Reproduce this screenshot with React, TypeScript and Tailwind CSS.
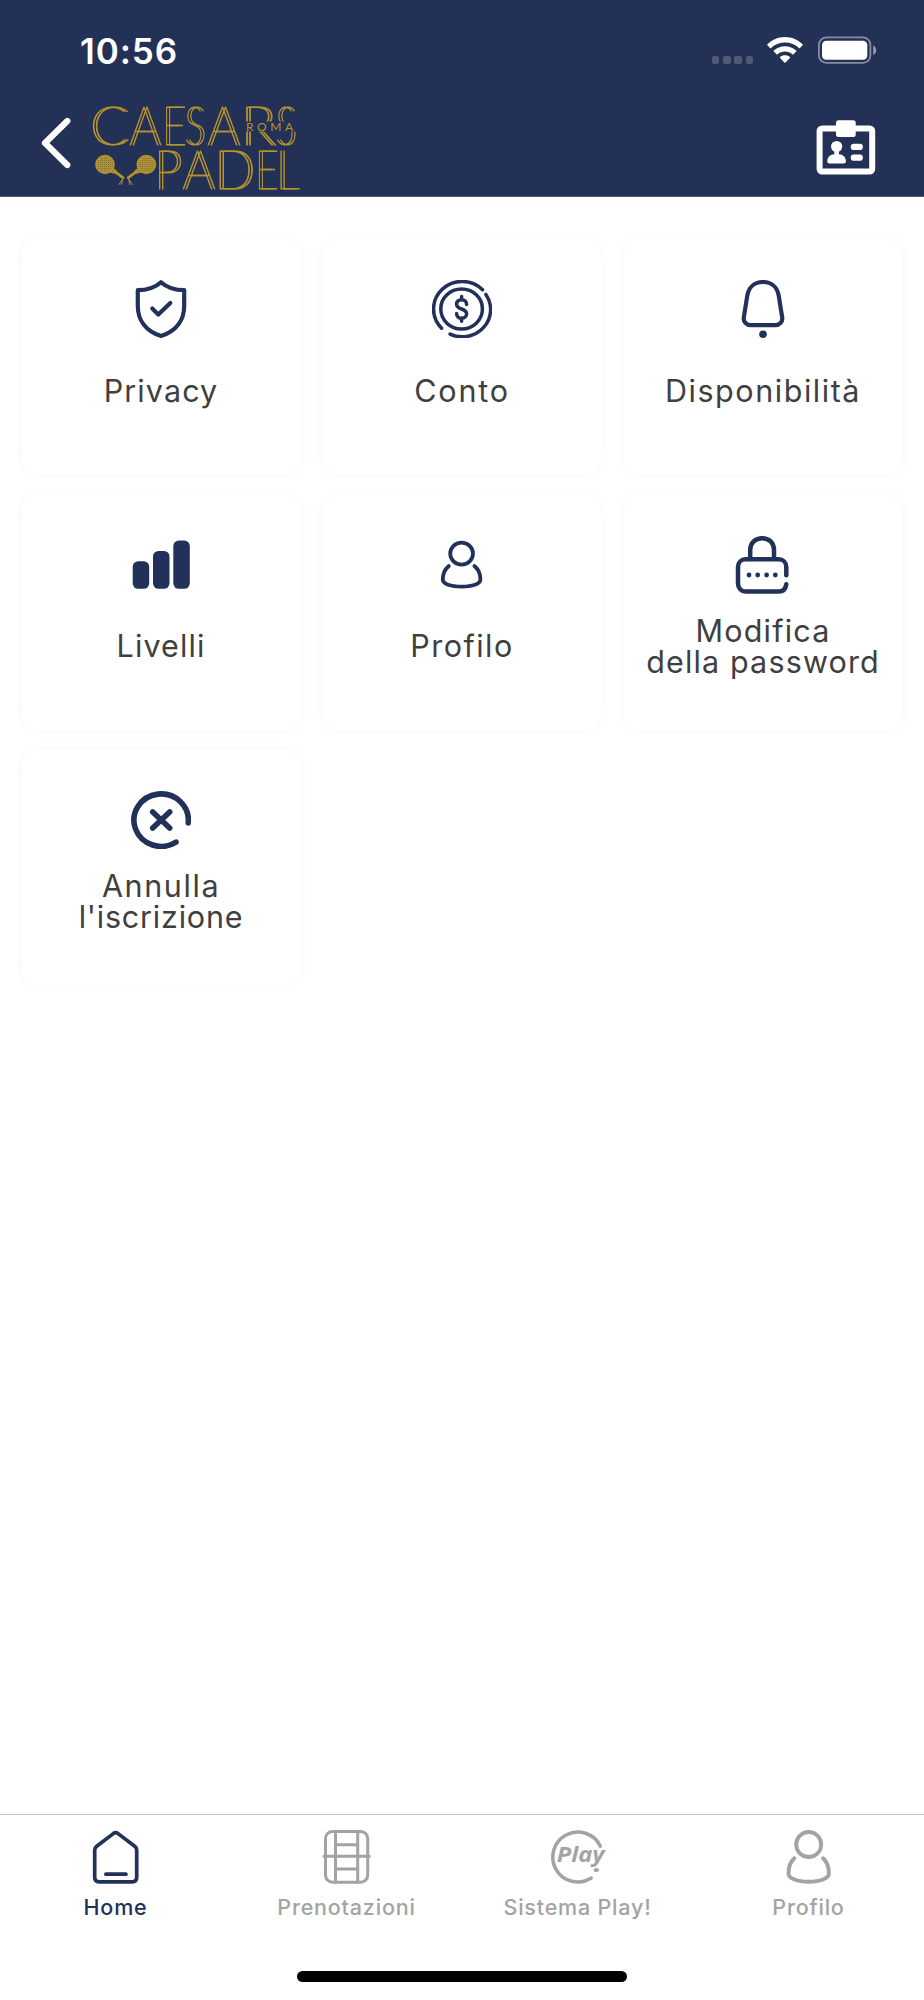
import React from 'react'

type MenuItem = {
  id: string
  lines: { text: string; spacing: string }[]
  icon: React.ReactNode
}

type TabItem = {
  id: string
  label: string
  active?: boolean
  icon: React.ReactNode
}

// glyph, x and width for each letter of the logo
const logoTop: [string, number, number][] = [
  ['C', 89.5, 38],
  ['A', 129, 30],
  ['E', 162, 22],
  ['S', 184.5, 19],
  ['A', 207, 31],
  ['R', 240, 34],
  ['S', 275.5, 19],
]
const logoBottom: [string, number, number][] = [
  ['P', 154, 26],
  ['A', 182, 31],
  ['D', 214, 39],
  ['E', 255, 21],
  ['L', 276, 21],
]

function MenuIcon({ children, width = 4.2 }: { children: React.ReactNode; width?: number }) {
  return (
    <svg
      className="w-[60px] h-[58px] text-[#22315a]"
      viewBox="0 0 60 58"
      fill="none"
      stroke="currentColor"
      strokeWidth={width}
      strokeLinecap="round"
      strokeLinejoin="round"
    >
      {children}
    </svg>
  )
}

function TabIcon({ children, width = 3.5 }: { children: React.ReactNode; width?: number }) {
  return (
    <svg
      className="w-[54px] h-[54px] overflow-visible"
      viewBox="0.3 0 54 54"
      fill="none"
      stroke="currentColor"
      strokeWidth={width}
      strokeLinecap="round"
      strokeLinejoin="round"
    >
      {children}
    </svg>
  )
}

const menuItems: MenuItem[] = [
  {
    id: 'privacy',
    lines: [{ text: 'Privacy', spacing: 'tracking-[1.1px]' }],
    icon: (
      <MenuIcon>
        <path d="M30 2.2C24 7.6 16 10.2 6.8 10.2V26c0 14 8 25 23.2 30 15.2-5 23.2-16 23.2-30V10.2C44 10.2 36 7.6 30 2.2z" />
        <path d="m21.3 28.5 6 6.1 12-11.6" />
      </MenuIcon>
    ),
  },
  {
    id: 'conto',
    lines: [{ text: 'Conto', spacing: 'tracking-[1.8px]' }],
    icon: (
      <MenuIcon width={3.5}>
        <g transform="translate(-0.4 0)">
          <path d="M51 9.8A28.3 27.3 0 1 0 10 48.2" />
          <path d="M54.3 14.4A28.3 27.3 0 0 1 18.5 54.1" />
          <ellipse cx="30" cy="29" rx="20.8" ry="20" />
          <path d="M30 16.5v3.3M30 38v3.3M35 24.6c0-2.9-2-4.9-5-4.9s-5 1.7-5 4.5c0 6 10 3.6 10 9.6 0 2.7-2 4.5-5 4.5s-5-2-5-4.9" />
        </g>
      </MenuIcon>
    ),
  },
  {
    id: 'disponibilita',
    lines: [{ text: 'Disponibilità', spacing: 'tracking-[1.55px]' }],
    icon: (
      <MenuIcon>
        <path d="M30 2C21 2 15.5 8 14.2 16L10.8 37.5c-.8 4.5 3 7.7 7 7.7h24.4c4 0 7.8-3.2 7-7.7L45.8 16C44.5 8 39 2 30 2z" />
        <circle cx="30" cy="54.2" r="3.8" fill="currentColor" stroke="none" />
      </MenuIcon>
    ),
  },
  {
    id: 'livelli',
    lines: [{ text: 'Livelli', spacing: 'tracking-[1.1px]' }],
    icon: (
      <MenuIcon>
        <g fill="currentColor" stroke="none">
          <rect x="1.7" y="25.2" width="16.5" height="27.6" rx="5.5" />
          <rect x="22" y="15" width="16.5" height="37.8" rx="5.5" />
          <rect x="42.3" y="4.6" width="16.5" height="48.2" rx="5.5" />
        </g>
      </MenuIcon>
    ),
  },
  {
    id: 'profilo',
    lines: [{ text: 'Profilo', spacing: 'tracking-[1.5px]' }],
    icon: (
      <MenuIcon width={3.8}>
        <g transform="translate(-0.4 0)">
          <ellipse cx="30" cy="17.6" rx="11.4" ry="11" />
          <path d="M17.2 30C13 33.5 11.2 39 11.2 43.5c0 4.5 8 7.1 18.8 7.1s18.8-2.6 18.8-7.1c0-4.5-1.8-10-6-13.5" />
        </g>
      </MenuIcon>
    ),
  },
  {
    id: 'password',
    lines: [
      { text: 'Modifica', spacing: 'tracking-[1.2px]' },
      { text: 'della password', spacing: 'tracking-[1.15px]' },
    ],
    icon: (
      <MenuIcon width={4.5}>
        <g transform="translate(-1 0)">
          <path d="M54.3 39.2V31c0-4.5-3.3-7.7-7.5-7.7H13.5c-4.2 0-7.5 3.2-7.5 7.7v16.5c0 4.5 3.3 8 7.5 8h33.3c4 0 6.8-2.7 7.5-7.2" />
          <path d="M18.2 23V14c0-7 5.2-11.8 12-11.8S42 7 42 14v9" />
          <g fill="currentColor" stroke="none">
            <circle cx="17" cy="39" r="2.4" />
            <circle cx="25.7" cy="39" r="2.4" />
            <circle cx="34.6" cy="39" r="2.4" />
            <circle cx="43.3" cy="39" r="2.4" />
          </g>
        </g>
      </MenuIcon>
    ),
  },
  {
    id: 'annulla',
    lines: [
      { text: 'Annulla', spacing: 'tracking-[1.6px]' },
      { text: "l'iscrizione", spacing: 'tracking-[0.8px]' },
    ],
    icon: (
      <MenuIcon width={5.6}>
        <path d="M57.2 31.9A27.2 26.2 0 1 0 45 51.1" />
        <path d="m21.7 21 17 16M38.7 21l-17 16" />
      </MenuIcon>
    ),
  },
]

const tabs: TabItem[] = [
  {
    id: 'home',
    label: 'Home',
    active: true,
    icon: (
      <TabIcon width={3.7}>
        <path d="M24.6 3.6 8 16.2Q6 17.7 6 20v27.3q0 4.5 4.5 4.5h33q4.5 0 4.5-4.5V20q0-2.3-2-3.8L29.4 3.6Q27 1.8 24.6 3.6z" />
        <path d="M17.2 44.2h20" />
      </TabIcon>
    ),
  },
  {
    id: 'prenotazioni',
    label: 'Prenotazioni',
    icon: (
      <TabIcon width={3}>
        <rect x="5.8" y="1.5" width="42.2" height="50.7" rx="7" />
        <path d="M15.8 1.5v50.7M38 1.5v50.7M4.2 26.2h45.4M15.8 14.8H38M15.8 39H38" />
      </TabIcon>
    ),
  },
  {
    id: 'sistema',
    label: 'Sistema Play!',
    icon: (
      <TabIcon width={3.5}>
        <path d="M49.6 16.2A25 25 0 1 0 40.5 48.1" />
        <text
          x="6"
          y="32.2"
          textLength="48"
          lengthAdjust="spacingAndGlyphs"
          className="font-['Open_Sans'] text-[22px] font-bold italic"
          fill="currentColor"
          stroke="none"
        >
          Play
        </text>
        <ellipse cx="45.7" cy="40" rx="2.7" ry="2.1" fill="currentColor" stroke="none" />
      </TabIcon>
    ),
  },
  {
    id: 'profilo',
    label: 'Profilo',
    icon: (
      <TabIcon width={3.9}>
        <circle cx="27" cy="14.5" r="12.5" />
        <path d="M12.6 28.3C8.5 32 6.8 38 6.8 43.2c0 5.5 9 8.6 20.2 8.6s20.2-3.1 20.2-8.6c0-5.2-1.7-11.2-5.8-14.9" />
      </TabIcon>
    ),
  },
]

function Logo() {
  const letter = ([char, x, width]: [string, number, number], y: number, index: number) => (
    <text key={index} x={x} y={y} textLength={width} lengthAdjust="spacingAndGlyphs">
      {char}
    </text>
  )

  return (
    <svg className="w-[212px] h-[90px] overflow-visible" viewBox="90 104 212 90">
      <defs>
        <pattern id="strings" width="2" height="2" patternUnits="userSpaceOnUse">
          <rect width="2" height="2" fill="#b4922c" />
          <rect width="1" height="1" fill="#7d7040" />
        </pattern>
      </defs>
      {/* the shadow gives the letters their second stem */}
      <g className="font-['Lato'] text-[53px] font-thin [filter:drop-shadow(3px_0_0_#b4922c)]" fill="#b4922c" stroke="#b4922c" strokeWidth="0.9">
        {logoTop.map((item, index) => letter(item, 145.2, index))}
        {logoBottom.map((item, index) => letter(item, 188.6, index))}
      </g>
      <rect x="244" y="121.5" width="55" height="10" fill="#243156" />
      <text x="246" y="130.5" textLength="47" className="font-['Lato'] text-[12px]" fill="#b4922c">
        ROMA
      </text>
      {['', 'matrix(-1 0 0 1 251.3 0)'].map((transform) => (
        <g key={transform} transform={transform} stroke="#b4922c" fill="none" strokeLinecap="round">
          <ellipse cx="105" cy="164.5" rx="9" ry="8.8" fill="url(#strings)" strokeWidth="1.7" />
          <path d="m112 168.5 4 3M110 171.5l6 1.5" strokeWidth="2.2" />
          <path d="m116 172.5 7 5.2" strokeWidth="2.8" />
          <path d="m123 178.5-4 6M122.5 180l-1 4.5" strokeWidth="1" />
        </g>
      ))}
    </svg>
  )
}

function StatusBar() {
  return (
    <div className="flex h-[100px] items-start justify-between pl-[80px] pr-[47px]">
      <span className="mt-[30px] text-[35px] leading-[42px] font-[580] tracking-[0.9px] text-white">10:56</span>
      <div className="mt-[36px] flex items-start">
        <div className="mt-[20px] flex gap-[3.7px]">
          {[0, 1, 2, 3].map((dot) => (
            <span key={dot} className="h-[7.5px] w-[7.5px] rounded-[2px] bg-white/20" />
          ))}
        </div>
        <svg className="ml-[14px] h-[28px] w-[36px]" viewBox="0 0 36 28" fill="#fff">
          <path d="M18 1C11 1 5 3.8.4 8.2c-.3.3-.3.8 0 1.1l2.6 2.6c.3.3.8.3 1.1 0C7.7 8.5 12.6 6.5 18 6.5s10.3 2 13.9 5.4c.3.3.8.3 1.1 0l2.6-2.6c.3-.3.3-.8 0-1.1C31 3.8 25 1 18 1z" />
          <path d="M18 10.2c-4.3 0-8.2 1.6-11.2 4.3-.3.3-.3.8 0 1.1l2.7 2.7c.3.3.8.3 1.1 0 2-1.7 4.6-2.7 7.4-2.7s5.4 1 7.4 2.7c.3.3.8.3 1.1 0l2.7-2.7c.3-.3.3-.8 0-1.1-3-2.7-6.9-4.3-11.2-4.3z" />
          <path d="M18 19.3c-1.9 0-3.6.6-4.9 1.7-.3.3-.3.7 0 1l4.3 4.4c.3.3.8.3 1.1 0l4.4-4.4c.3-.3.3-.7 0-1-1.3-1.1-3-1.7-4.9-1.7z" />
        </svg>
        <svg className="ml-[14px] h-[28px] w-[60px]" viewBox="0 0 60 28">
          <rect x="1.9" y="1.4" width="51.5" height="25.5" rx="7.5" fill="none" stroke="#fff" strokeOpacity=".45" strokeWidth="1.8" />
          <rect x="5" y="4.8" width="45.3" height="19" rx="4.3" fill="#fff" />
          <path d="M56.2 9.5c4 1.7 4 7.8 0 9.5z" fill="#fff" fillOpacity=".5" />
        </svg>
      </div>
    </div>
  )
}

export default function App() {
  return (
    <div className="flex h-[2000px] w-[924px] flex-col bg-white font-['Inter',sans-serif]">
      <header className="h-[197px] border-b border-[#4d587a] bg-[#243156]">
        <StatusBar />
        <div className="flex items-start pt-1 pl-[40px] pr-[48px]">
          <button className="mt-[12px] h-[54px] w-[32px]">
            <svg className="h-[54px] w-[32px]" viewBox="40 116 32 54" fill="none" stroke="#fff" strokeWidth="6.2" strokeLinecap="round" strokeLinejoin="round">
              <path d="M67.3 121 45 143l22.3 22" />
            </svg>
          </button>
          <div className="ml-[18px]">
            <Logo />
          </div>
          <svg className="mt-[15px] ml-auto h-[57px] w-[60px]" viewBox="816 119 60 57" fill="#fff">
            <rect x="819.6" y="128.5" width="52.6" height="43" rx="2.5" fill="none" stroke="#fff" strokeWidth="6" />
            <rect x="836" y="120.2" width="19.7" height="16.8" rx="2.5" />
            <circle cx="836.6" cy="146.5" r="5.6" />
            <path d="M834.3 150h4.6v4.2c4 .2 7 2.8 7 7 0 1.5-.8 2.2-2.2 2.2h-14.2c-1.4 0-2.2-.7-2.2-2.2 0-4.2 3-6.8 7-7z" />
            <rect x="850.7" y="143.7" width="12.2" height="6.3" rx="3.1" />
            <rect x="850.7" y="154.5" width="12.2" height="6.3" rx="3.1" />
          </svg>
        </div>
      </header>

      <main className="flex-1 px-[22px] pt-[42px]">
        <div className="grid grid-cols-3 gap-x-[23px] gap-y-[20.5px]">
          {menuItems.map((item) => (
            <button
              key={item.id}
              className="flex h-[235px] flex-col items-center rounded-[16px] bg-white pt-[41px] shadow-[0_0_12px_rgba(0,0,0,0.04)]"
            >
              {item.icon}
              <div className="mt-[21px] flex h-[62px] flex-col items-center justify-center text-[30.5px] leading-[31px] font-[380] whitespace-nowrap text-[#3f3f3f]">
                {item.lines.map((line) => (
                  <span key={line.text} className={line.spacing}>
                    {line.text}
                  </span>
                ))}
              </div>
            </button>
          ))}
        </div>
      </main>

      <nav className="h-[186px] border-t border-[#c6c6c6]">
        <div className="grid h-[156px] grid-cols-4 pt-[15px]">
          {tabs.map((tab) => (
            <button
              key={tab.id}
              className={`flex flex-col items-center ${tab.active ? 'text-[#22315a]' : 'text-[#a3a3a3]'}`}
            >
              {tab.icon}
              <span className="mt-[10px] text-[21.5px] leading-[26px] font-[460] tracking-[0.8px] whitespace-nowrap">
                {tab.label}
              </span>
            </button>
          ))}
        </div>
        <div className="mx-auto h-[11px] w-[330px] rounded-full bg-black" />
      </nav>
    </div>
  )
}
